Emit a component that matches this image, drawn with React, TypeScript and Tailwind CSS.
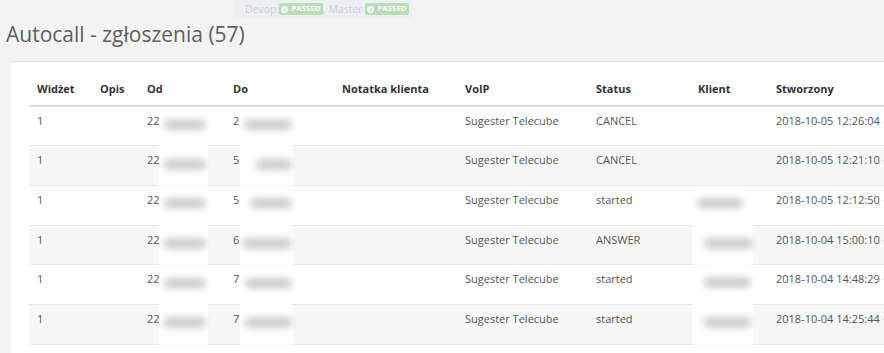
import React from 'react';

type Row = {
    widget: string;
    od: string;
    doNum: string;
    voip: string;
    status: string;
    created: string;
};

const rows: Row[] = [
    { widget: '1', od: '22', doNum: '2', voip: 'Sugester Telecube', status: 'CANCEL', created: '2018-10-05 12:26:04 +0200' },
    { widget: '1', od: '22', doNum: '5', voip: 'Sugester Telecube', status: 'CANCEL', created: '2018-10-05 12:21:10 +0200' },
    { widget: '1', od: '22', doNum: '5', voip: 'Sugester Telecube', status: 'started', created: '2018-10-05 12:12:50 +0200' },
    { widget: '1', od: '22', doNum: '6', voip: 'Sugester Telecube', status: 'ANSWER', created: '2018-10-04 15:00:10 +0200' },
    { widget: '1', od: '22', doNum: '7', voip: 'Sugester Telecube', status: 'started', created: '2018-10-04 14:48:29 +0200' },
    { widget: '1', od: '22', doNum: '7', voip: 'Sugester Telecube', status: 'started', created: '2018-10-04 14:25:44 +0200' },
];

const headers = ['Widżet', 'Opis', 'Od', 'Do', 'Notatka klienta', 'VoIP', 'Status', 'Klient', 'Stworzony'];
const widths = [63, 47, 86, 109, 123, 131, 102, 78, 200];

// blurred bars hiding phone numbers, one per row: [left offset, width]
const odBars: [number, number][] = [[5, 42], [5, 42], [5, 42], [5, 42], [5, 42], [5, 42]];
const doBars: [number, number][] = [[4, 48], [16, 36], [10, 42], [3, 49], [5, 47], [5, 47]];
const klientBars: [number, number][] = [[5, 46], [12, 49], [12, 47], [12, 47]];

const PassedBadge = () => (
    <span className="inline-flex shrink-0 items-center gap-[3px] h-[12px] w-[44px] justify-center rounded-[2px] bg-[#b9dcb9] text-white text-[7.5px] font-bold leading-none tracking-[0.2px]">
        <svg width="7" height="7" viewBox="0 0 10 10" fill="none">
            <circle cx="5" cy="5" r="4.8" fill="white" />
            <path d="M3 5 a2 2 0 1 0 2 -2" stroke="#b9dcb9" strokeWidth="1.5" fill="none" />
        </svg>
        PASSED
    </span>
);

const BlurPatch: React.FC<{ left: number; top: number; width: number; bars: [number, number][] }> = ({ left, top, width, bars }) => (
    <div
        className="absolute flex flex-col bg-white/80 pt-[2px]"
        style={{ left, top, width }}
    >
        {bars.map(([x, w], i) => (
            <div key={i} className="h-[39.7px] relative">
                <div
                    className="absolute top-[9px] h-[11px] rounded-full bg-[#d0d0d0] blur-[3px]"
                    style={{ left: x, width: w }}
                />
            </div>
        ))}
    </div>
);

export default function App() {
    return (
        <div className="w-[884px] h-[353px] overflow-hidden bg-[#f3f3f3] font-['Open_Sans',sans-serif] relative">
            <div className="flex justify-start pl-[234px]">
                <div className="w-[179px] h-[18px] bg-[#edf0f3] rounded-b-[3px] flex items-center pl-[11px] text-[10.5px] text-[#c9cdd2] leading-none whitespace-nowrap">
                    <span className="w-[34px] shrink-0">Devop:</span>
                    <PassedBadge />
                    <span className="w-[42px] shrink-0">, Master</span>
                    <PassedBadge />
                </div>
            </div>

            <h1 className="mt-[1px] ml-[6px] text-[21px] font-normal text-[#5f5f5f] leading-[30px]">Autocall - zgłoszenia (57)</h1>

            <div className="ml-[11px] mt-[12px] w-[1000px] bg-white border-t border-[#e6e6e6] pt-[11px] pl-[18px] pb-[20px] relative">
                <table className="table-fixed border-collapse text-[11px]">
                    <colgroup>
                        {widths.map((w, i) => (
                            <col key={i} style={{ width: w }} />
                        ))}
                    </colgroup>
                    <thead>
                        <tr className="border-b-2 border-[#dcdcdc]">
                            {headers.map((h) => (
                                <th key={h} className="text-left font-bold text-[#333] px-[8px] py-[7px] leading-[18px] whitespace-nowrap">
                                    {h}
                                </th>
                            ))}
                        </tr>
                    </thead>
                    <tbody>
                        {rows.map((r, i) => (
                            <tr key={i} className={`h-[39.7px] border-b border-[#e6e6e6] align-top ${i % 2 === 1 ? 'bg-[#f7f7f7]' : 'bg-white'}`}>
                                <td className="px-[8px] pt-[5px] text-[#555] leading-[18px]">{r.widget}</td>
                                <td className="px-[8px] pt-[5px]"></td>
                                <td className="px-[8px] pt-[5px] text-[#555] leading-[18px]">{r.od}</td>
                                <td className="px-[8px] pt-[5px] text-[#555] leading-[18px]">{r.doNum}</td>
                                <td className="px-[8px] pt-[5px]"></td>
                                <td className="px-[8px] pt-[5px] text-[#555] leading-[18px] whitespace-nowrap">{r.voip}</td>
                                <td className="px-[8px] pt-[5px] text-[#555] leading-[18px]">{r.status}</td>
                                <td className="px-[8px] pt-[5px]"></td>
                                <td className="px-[8px] pt-[5px] text-[#555] leading-[18px] whitespace-nowrap">{r.created}</td>
                            </tr>
                        ))}
                    </tbody>
                </table>

                <BlurPatch left={148} top={46} width={49} bars={odBars} />
                <BlurPatch left={229} top={46} width={53} bars={doBars} />
                <BlurPatch left={681} top={125} width={61} bars={klientBars} />
            </div>
        </div>
    );
}
